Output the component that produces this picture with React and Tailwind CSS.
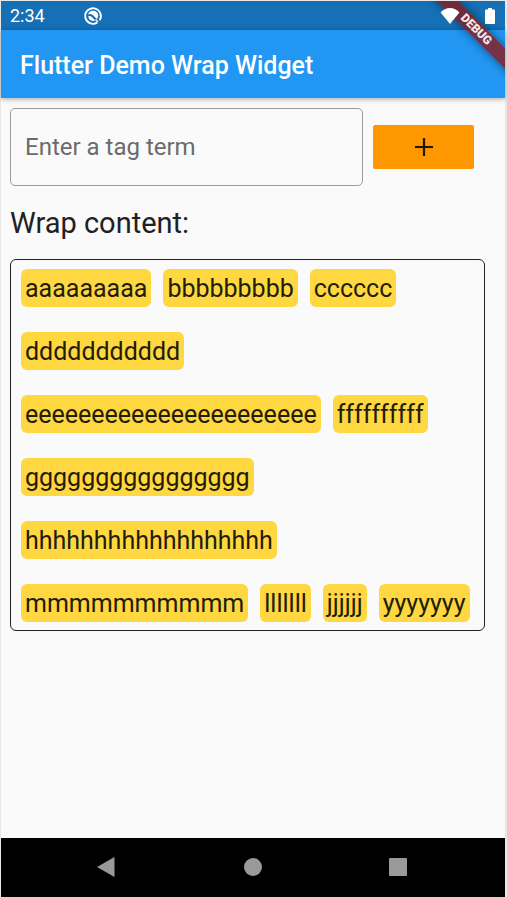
import React, { useState } from "react";

const initialTags = [
  "aaaaaaaaa",
  "bbbbbbbbb",
  "cccccc",
  "ddddddddddd",
  "eeeeeeeeeeeeeeeeeeeeee",
  "ffffffffff",
  "gggggggggggggggg",
  "hhhhhhhhhhhhhhhhhh",
  "mmmmmmmmmm",
  "lllllll",
  "jjjjjj",
  "yyyyyyy",
];

function StatusBar() {
  return (
    <div className="flex h-[29px] items-center bg-[#1570b5] pl-[9px] pr-[10px] text-white">
      <span className="text-[18px] leading-[29px]">2:34</span>
      <svg className="ml-[38px]" width="20" height="20" viewBox="0 0 20 20" fill="none">
        <path d="M14.200 16.600A7.800 7.800 0 1 1 16.600 14.200" stroke="#fff" strokeWidth="1.900" />
        <path d="M5 8.500A5.200 5.200 0 0 1 15.200 9.500c0 1.600-.6 2.800-1.300 3.600L9.800 9C8.600 7.800 6.500 7.500 5 8.500z" fill="#fff" />
        <path d="M5.200 10.500c1.200-.8 2.600-.5 3.600.5l3.400 3.400c-3.200 1.400-6.600-.3-7-3.900z" fill="#fff" />
        <path d="M12.500 13.500l2.500 2.500" stroke="#fff" strokeWidth="1.400" />
      </svg>
      <svg className="relative z-20 ml-auto" width="20" height="16" viewBox="0 0 20 16">
        <path d="M10 16L.6 4.500C3.200 1.600 6.400 0 10 0s6.800 1.600 9.400 4.500z" fill="#fff" />
      </svg>
      <svg className="relative z-20 ml-[25px]" width="10" height="16" viewBox="0 0 10 16">
        <path d="M3 0h4v1.600h2.200c.5 0 .8.300.8.800v12.800c0 .500-.3.800-.8.800H.8c-.5 0-.8-.3-.8-.8V2.400c0-.5.300-.8.800-.8H3z" fill="#fff" />
      </svg>
    </div>
  );
}

function DebugRibbon() {
  return (
    <div className="pointer-events-none absolute right-0 top-0 z-10 h-[90px] w-[90px] overflow-hidden">
      <div className="absolute -right-[51px] top-[21px] h-[15px] w-[160px] rotate-45 bg-[#8d1616]/78 text-center text-[12px] font-black leading-[15px] text-white/90 shadow-[0_0_8px_rgba(0,0,0,0.5)]">
        DEBUG
      </div>
    </div>
  );
}

function NavBar() {
  return (
    <nav className="flex h-[59px] items-center justify-around bg-black px-[33px] pb-[2px]">
      <button type="button" aria-label="Back">
        <svg width="20" height="20" viewBox="0 0 20 20">
          <path d="M17.500 0v20L0 10z" fill="#999" />
        </svg>
      </button>
      <button type="button" aria-label="Home">
        <svg width="20" height="20" viewBox="0 0 20 20">
          <circle cx="10" cy="10" r="9" fill="#999" />
        </svg>
      </button>
      <button type="button" aria-label="Overview">
        <svg width="20" height="20" viewBox="0 0 20 20">
          <rect x="0" y="1" width="18" height="18" rx="1" fill="#999" />
        </svg>
      </button>
    </nav>
  );
}

export default function App() {
  const [tags, setTags] = useState(initialTags);
  const [term, setTerm] = useState("");

  const addTag = (event) => {
    event.preventDefault();
    if (term.trim()) {
      setTags([...tags, term.trim()]);
      setTerm("");
    }
  };

  return (
    <div className="flex min-h-screen flex-col border-l border-r-2 border-t border-[#e8e8e8] bg-[#fafafa] font-['Roboto',sans-serif] text-[#212121]">
      <div className="relative flex grow flex-col">
        <StatusBar />
        <DebugRibbon />
        <header className="flex h-[68px] items-center bg-[#2196f3] px-[19px] pt-[4px] shadow-[0_1px_5px_rgba(0,0,0,0.35)]">
          <h1 className="text-[25px] font-medium leading-[28px] text-white">Flutter Demo Wrap Widget</h1>
        </header>
        <main className="grow pl-[9px] pr-[20px] pt-[10px]">
          <form className="flex items-center gap-[10px] pr-[11px]" onSubmit={addTag}>
            <input
              type="text"
              aria-label="Enter a tag term"
              placeholder="Enter a tag term"
              value={term}
              onChange={(event) => setTerm(event.target.value)}
              className="h-[78px] min-w-0 grow rounded-[5px] border border-[#9c9c9c] bg-transparent px-[14px] text-[24px] leading-[28px] outline-none placeholder:text-[#6b6b6b]"
            />
            <button
              type="submit"
              aria-label="Add tag"
              className="flex h-[44px] w-[101px] shrink-0 items-center justify-center rounded-[2px] bg-[#ff9800]"
            >
              <svg width="18" height="18" viewBox="0 0 18 18">
                <path d="M9 0v18M0 9h18" stroke="#211500" strokeWidth="2.200" />
              </svg>
            </button>
          </form>
          <h2 className="mt-[19px] text-[29px] leading-[36px]">Wrap content:</h2>
          <ul className="mt-[18px] flex flex-wrap gap-x-[12px] gap-y-[25px] rounded-[6px] border border-[#222] pb-[8px] pl-[10px] pr-[8px] pt-[9px]">
            {tags.map((tag, index) => (
              <li
                key={index}
                className="rounded-[6px] bg-[#ffd740] px-[4px] pt-[2px] text-[25px] leading-[36px] text-[#221d09]"
              >
                {tag}
              </li>
            ))}
          </ul>
        </main>
      </div>
      <NavBar />
    </div>
  );
}
